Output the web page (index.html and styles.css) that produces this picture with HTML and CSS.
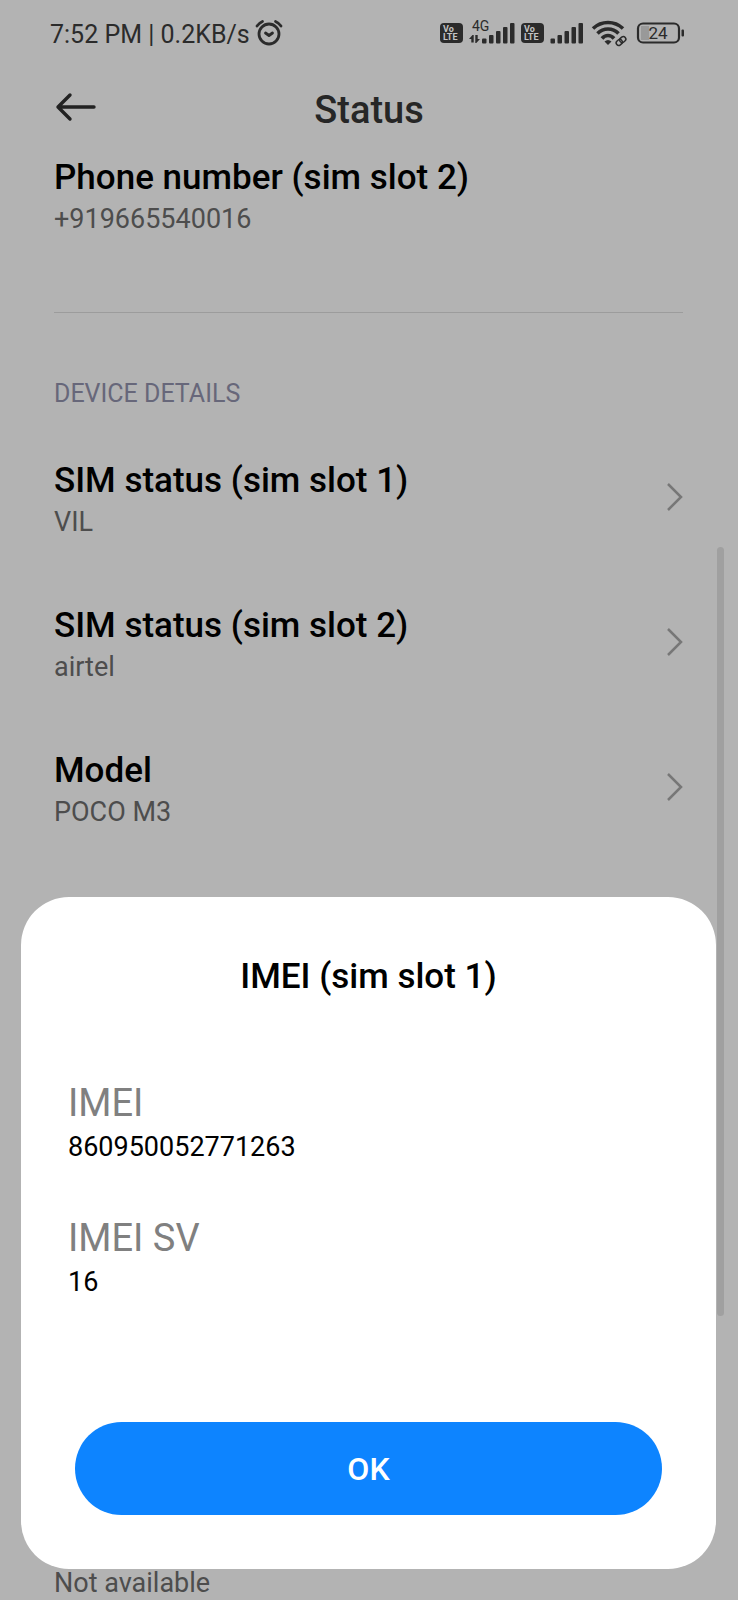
FILE: index.html
```html
<!DOCTYPE html>
<html lang="en">
<head>
<meta charset="utf-8">
<meta name="viewport" content="width=device-width, initial-scale=1">
<title>Status</title>
<link rel="stylesheet" href="styles.css">
</head>
<body>
<div class="screen">
  <div class="statusbar">
    <div class="statusbar-left">
      <span>7:52 PM | 0.2KB/s</span>
      <svg class="icon" width="28" height="28" viewBox="0 0 28 28" fill="none" stroke="currentColor" stroke-width="2.8" stroke-linecap="round" stroke-linejoin="round" aria-label="Alarm set">
        <circle cx="14" cy="15" r="10"/>
        <path d="M10.5 14l3.500 2.500 3.500-2.500M2 7Q4 4 7.500 2.500M26 7Q24 4 20.500 2.500"/>
      </svg>
    </div>
    <div class="statusbar-right">
      <span class="volte"><span>Vo</span><span>LTE</span></span>
      <svg class="icon" width="46" height="34" viewBox="0 -2 46 34" fill="currentColor" aria-label="4G signal">
        <text class="net" x="3" y="13">4G</text>
        <path d="M3.500 17L0 21h2.300v3.500h2.400V17zM7.300 25l3.700-4H8.700v-4H6.300v8z"/>
        <rect x="13" y="20.500" width="4.500" height="5" rx="1"/><rect x="20" y="17" width="4.500" height="8.500" rx="1"/><rect x="27" y="13" width="4.500" height="12.500" rx="1"/><rect x="34" y="9" width="4.500" height="16.500" rx="1"/><rect x="41" y="5" width="4.500" height="20.500" rx="1"/>
      </svg>
      <span class="volte"><span>Vo</span><span>LTE</span></span>
      <svg class="icon" width="34" height="34" viewBox="0 -2 34 34" fill="currentColor" aria-label="Signal">
        <rect x="0.500" y="20.500" width="4.500" height="5" rx="1"/><rect x="7.500" y="17" width="4.500" height="8.500" rx="1"/><rect x="14.500" y="13" width="4.500" height="12.500" rx="1"/><rect x="21.500" y="9" width="4.500" height="16.500" rx="1"/><rect x="28.500" y="5" width="4.500" height="20.500" rx="1"/>
      </svg>
      <svg class="icon" width="38" height="28" viewBox="0 1 38 28" fill="none" stroke="currentColor" aria-label="Wi-Fi">
        <path stroke-width="3.600" d="M3 10.500Q9.500 4.500 18 4.500T33 10.500M7.500 15.500Q12 11 18 11T28.500 15.500M12 20.500Q14.500 17.500 18 17.500T24 20.500"/>
        <path fill="currentColor" stroke="none" d="M14.500 23.500Q18 20.500 21.500 23.500L18 27z"/>
        <g stroke-width="1.500" transform="rotate(-40 31 23)"><rect x="25.500" y="20.500" width="6.500" height="5" rx="2.500"/><rect x="30" y="20.500" width="6.500" height="5" rx="2.500"/></g>
      </svg>
      <svg class="icon" width="50" height="24" viewBox="0 0 50 24" aria-label="Battery 24 percent">
        <rect x="7" y="5" width="8" height="14" fill="#999"/>
        <rect x="4" y="2.500" width="41" height="19" rx="5" fill="none" stroke="currentColor" stroke-width="2.200"/>
        <rect x="47.500" y="8.500" width="2.500" height="7" rx="1" fill="currentColor"/>
        <text class="level" x="24" y="18">24</text>
      </svg>
    </div>
  </div>

  <header class="header">
    <button class="back" type="button" aria-label="Back">
      <svg width="42" height="30" viewBox="0 0 42 30" fill="none" stroke="currentColor" stroke-width="3.400" stroke-linecap="round" stroke-linejoin="round"><path d="M15 3L3 15l12 12M3 15h36"/></svg>
    </button>
    <h1 class="title">Status</h1>
  </header>

  <main class="content">
    <section class="row row-first">
      <div><h2 class="row-title">Phone number (sim slot 2)</h2><p class="row-sub">+919665540016</p></div>
    </section>
    <h3 class="label">DEVICE DETAILS</h3>
    <a class="row" href="#sim1">
      <span><span class="row-title">SIM status (sim slot 1)</span><span class="row-sub">VIL</span></span>
      <svg class="chevron" width="17" height="30" viewBox="0 0 17 30"><path d="M2 1l13 13L2 27"/></svg>
    </a>
    <a class="row" href="#sim2">
      <span><span class="row-title">SIM status (sim slot 2)</span><span class="row-sub">airtel</span></span>
      <svg class="chevron" width="17" height="30" viewBox="0 0 17 30"><path d="M2 1l13 13L2 27"/></svg>
    </a>
    <a class="row" href="#model">
      <span><span class="row-title">Model</span><span class="row-sub">POCO M3</span></span>
      <svg class="chevron" width="17" height="30" viewBox="0 0 17 30"><path d="M2 1l13 13L2 27"/></svg>
    </a>
    <p class="row-sub row-last">Not available</p>
  </main>
  <div class="scrollbar"></div>

  <div class="dialog" role="dialog" aria-modal="true" aria-labelledby="dialog-title">
    <h2 class="dialog-title" id="dialog-title">IMEI (sim slot 1)</h2>
    <dl class="facts">
      <div><dt>IMEI</dt><dd>860950052771263</dd></div>
      <div><dt>IMEI SV</dt><dd>16</dd></div>
    </dl>
    <button class="ok" type="button">OK</button>
  </div>
</div>
</body>
</html>
```
FILE: styles.css
```css
* { box-sizing: border-box; }
body, h1, h2, h3, p, dl, dd { margin: 0; }
body {
  background: #b3b3b3;
  font-family: Roboto, "Noto Sans", sans-serif;
  color: #000;
}
button { border: 0; padding: 0; font: inherit; cursor: pointer; }

.screen {
  position: relative;
  height: 100vh;
  overflow: hidden;
  display: flex;
  flex-direction: column;
}

.statusbar {
  flex: none;
  display: flex;
  justify-content: space-between;
  align-items: center;
  height: 66px;
  padding: 0 54px 0 50px;
  color: #2b2b2b;
}
.statusbar-left {
  display: flex;
  align-items: center;
  gap: 5px;
  padding-top: 3px;
  font-size: 25px;
  line-height: 32px;
}
.statusbar-left .icon { margin-bottom: 4px; }
.statusbar-right { display: flex; align-items: center; gap: 6px; }
.icon { display: block; flex: none; overflow: visible; }
.volte {
  display: flex;
  flex-direction: column;
  align-items: flex-start;
  justify-content: center;
  width: 23px;
  height: 20px;
  padding-left: 3px;
  border-radius: 4px;
  background: #2b2b2b;
  color: #c4c4c4;
  font-size: 9px;
  font-weight: 700;
  line-height: 8px;
}
.net { font-size: 14px; }
.level { font-size: 17px; text-anchor: middle; fill: currentColor; }

.header {
  flex: none;
  display: grid;
  grid-template-columns: 42px 1fr 42px;
  align-items: center;
  height: 88px;
  padding: 0 55px 6px;
}
.back { display: flex; background: none; color: #222; }
.title {
  padding-top: 6px;
  text-align: center;
  font-size: 38px;
  line-height: 46px;
  font-weight: 500;
  color: #262626;
}

.content { padding: 0 55px 0 54px; }
.row {
  display: flex;
  align-items: center;
  justify-content: space-between;
  padding: 31px 0 33px;
  color: inherit;
  text-decoration: none;
}
.row-first { padding: 0 0 77px; border-bottom: 1px solid #9c9c9c; }
.row-title {
  display: block;
  font-size: 35px;
  line-height: 48px;
  font-weight: 500;
}
.row-sub {
  display: block;
  margin-top: 1px;
  font-size: 27px;
  line-height: 32px;
  color: #4d4d4d;
}
.row-last { margin-top: 706px; }
.label {
  padding: 65px 0 16px;
  font-size: 25px;
  line-height: 32px;
  font-weight: 400;
  color: #67677a;
}
.chevron { fill: none; stroke: #777; stroke-width: 2.5; }

.scrollbar {
  position: absolute;
  top: 547px;
  right: 14px;
  width: 7px;
  height: 769px;
  border-radius: 4px;
  background: #a0a0a0;
}

.dialog {
  position: absolute;
  right: 22px;
  bottom: 31px;
  left: 21px;
  padding: 57px 54px 54px;
  border-radius: 48px;
  background: #fff;
}
.dialog-title {
  text-align: center;
  font-size: 35px;
  line-height: 46px;
  font-weight: 500;
}
.facts {
  display: grid;
  gap: 52px;
  margin: 80px -7px 124px;
}
.facts dt { font-size: 38px; line-height: 46px; color: #808080; }
.facts dd { margin-top: 5px; font-size: 27px; line-height: 32px; }
.ok {
  display: block;
  width: 100%;
  height: 93px;
  border-radius: 48px;
  background: #0d84ff;
  color: #fff;
  font-size: 32px;
  font-weight: 500;
}
```
